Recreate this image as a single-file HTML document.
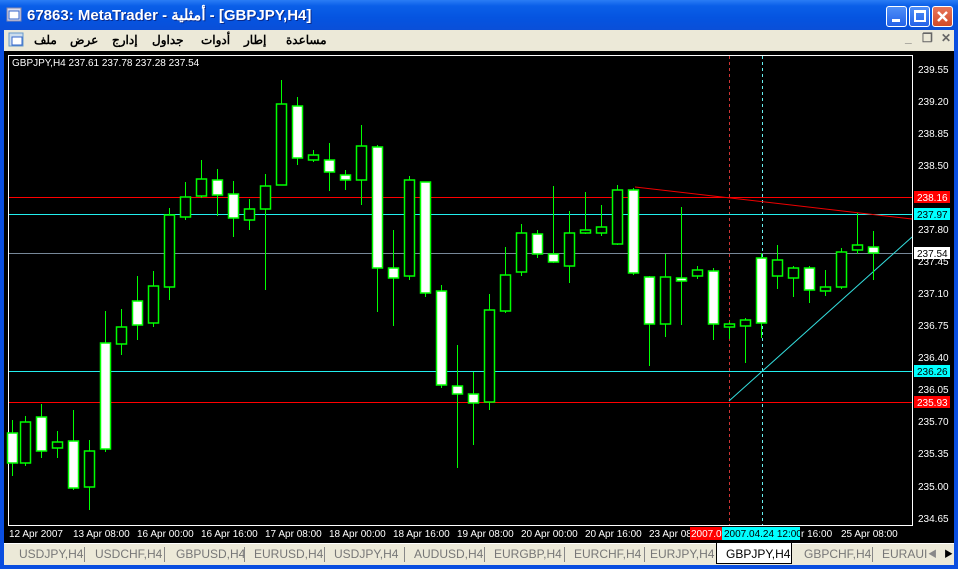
<!DOCTYPE html>
<html><head><meta charset="utf-8"><style>
*{margin:0;padding:0;box-sizing:border-box}
body{width:958px;height:569px;overflow:hidden;background:#0a4ee0;font-family:"Liberation Sans","Noto Sans CJK SC",sans-serif;position:relative}
#title{position:absolute;left:0;top:0;width:958px;height:30px;background:linear-gradient(#2a7df5,#0a5fe8 20%,#0554e0 60%,#0a4fd8);color:#fff;font-weight:bold;font-size:15px}
#title .t{position:absolute;left:27px;top:6px;text-shadow:1px 1px #0a2a8a}
.wb{position:absolute;top:6px;width:21px;height:21px;border:1px solid #fff;border-radius:3px;background:linear-gradient(#4f8ff8,#2462e8)}
#menu{position:absolute;left:4px;top:30px;width:950px;height:21px;background:#ece9d8;font-size:12px;font-weight:bold;color:#000}
#menu span{position:absolute;top:3px}
#chart{position:absolute;left:4px;top:51px;width:950px;height:492px;background:#000}
#tabs{position:absolute;left:4px;top:543px;width:950px;height:22px;background:#ece9d8;border-top:1px solid #fff;font-size:12px;color:#777}
#tabs span{position:absolute;top:3px}
.sep{position:absolute;top:3px;width:1px;height:15px;background:#888}
</style></head><body>
<div id="title">
<svg style="position:absolute;left:6px;top:7px" width="16" height="16"><rect x="1" y="1" width="14" height="13" fill="#dde" stroke="#88a"/><rect x="3" y="4" width="10" height="8" fill="#fff" stroke="#36c"/></svg>
<div class="t">67863: MetaTrader - أمثلية - [GBPJPY,H4]</div>
<div class="wb" style="left:886px"><div style="position:absolute;left:5px;top:12px;width:8px;height:3px;background:#fff"></div></div>
<div class="wb" style="left:909px"><div style="position:absolute;left:4px;top:3px;width:12px;height:12px;border:2px solid #fff;border-top-width:3px"></div></div>
<div class="wb" style="left:932px;background:linear-gradient(#e8765a,#d04a28)"><svg width="19" height="19"><path d="M5 5L14 14M14 5L5 14" stroke="#fff" stroke-width="2.5"/></svg></div>
</div>
<div id="menu">
<svg style="position:absolute;left:4px;top:2px" width="16" height="16"><rect x="1" y="1" width="14" height="13" fill="#cde" stroke="#69c"/><rect x="4" y="5" width="10" height="8" fill="#fff" stroke="#36c"/></svg>
<span style="left:30px">ملف</span><span style="left:66px">عرض</span><span style="left:108px">إدارج</span><span style="left:148px">جداول</span><span style="left:197px">أدوات</span><span style="left:240px">إطار</span><span style="left:282px">مساعدة</span>
<span style="left:901px;top:1px;color:#666">_</span><span style="left:918px;top:1px;color:#666">❐</span><span style="left:937px;top:1px;color:#666">✕</span>
</div>
<div id="chart">
<svg width="950" height="492" viewBox="4 51 950 492" style="font-family:'Liberation Sans',sans-serif;font-size:10px">
<rect x="8.5" y="55.5" width="904" height="470" fill="none" stroke="#fff"/>
<line x1="729.5" y1="56" x2="729.5" y2="525" stroke="#c33" stroke-dasharray="3,3"/>
<line x1="762.5" y1="56" x2="762.5" y2="525" stroke="#6ee" stroke-dasharray="3,3"/>
<line x1="9" y1="197.5" x2="912" y2="197.5" stroke="#f00"/>
<line x1="9" y1="214.5" x2="912" y2="214.5" stroke="#2ee"/>
<line x1="9" y1="253.5" x2="912" y2="253.5" stroke="#789"/>
<line x1="9" y1="371.5" x2="912" y2="371.5" stroke="#2ee"/>
<line x1="9" y1="402.5" x2="912" y2="402.5" stroke="#f00"/>
<line x1="635" y1="187" x2="912" y2="219" stroke="#e00"/>
<line x1="729" y1="401" x2="912" y2="237" stroke="#3dd"/>
<g stroke="#0f0" id="c"></g>
<g fill="#fff">
<text x="12" y="66">GBPJPY,H4  237.61 237.78 237.28 237.54</text>
<text x="918" y="73">239.55</text><text x="918" y="105">239.20</text><text x="918" y="137">238.85</text><text x="918" y="169">238.50</text><text x="918" y="233">237.80</text><text x="918" y="265">237.45</text><text x="918" y="297">237.10</text><text x="918" y="329">236.75</text><text x="918" y="361">236.40</text><text x="918" y="393">236.05</text><text x="918" y="425">235.70</text><text x="918" y="457">235.35</text><text x="918" y="490">235.00</text><text x="918" y="522">234.65</text>
</g>
<rect x="914" y="191" width="36" height="12" fill="#f00"/><text x="917" y="201" fill="#fff">238.16</text>
<rect x="914" y="208" width="36" height="12" fill="#0ff"/><text x="917" y="218" fill="#000">237.97</text>
<rect x="914" y="247" width="36" height="12" fill="#fff"/><text x="917" y="257" fill="#000">237.54</text>
<rect x="914" y="365" width="36" height="12" fill="#0ff"/><text x="917" y="375" fill="#000">236.26</text>
<rect x="914" y="396" width="36" height="12" fill="#f00"/><text x="917" y="406" fill="#fff">235.93</text>
<g fill="#fff">
<text x="9" y="537">12 Apr 2007</text><text x="73" y="537">13 Apr 08:00</text><text x="137" y="537">16 Apr 00:00</text><text x="201" y="537">16 Apr 16:00</text><text x="265" y="537">17 Apr 08:00</text><text x="329" y="537">18 Apr 00:00</text><text x="393" y="537">18 Apr 16:00</text><text x="457" y="537">19 Apr 08:00</text><text x="521" y="537">20 Apr 00:00</text><text x="585" y="537">20 Apr 16:00</text><text x="649" y="537">23 Apr 08</text><text x="801" y="537">r 16:00</text><text x="841" y="537">25 Apr 08:00</text>
</g>
<rect x="690" y="527" width="33" height="13" fill="#f00"/><text x="691" y="537" fill="#fff">2007.0</text>
<rect x="722" y="527" width="78" height="13" fill="#0ff"/><text x="724" y="537" fill="#000">2007.04.24 12:00</text>
</svg>
</div>
<div id="tabs">
<span style="left:15px">USDJPY,H4</span><div class="sep" style="left:80px"></div>
<span style="left:91px">USDCHF,H4</span><div class="sep" style="left:160px"></div>
<span style="left:172px">GBPUSD,H4</span><div class="sep" style="left:240px"></div>
<span style="left:250px">EURUSD,H4</span><div class="sep" style="left:320px"></div>
<span style="left:330px">USDJPY,H4</span><div class="sep" style="left:400px"></div>
<span style="left:410px">AUDUSD,H4</span><div class="sep" style="left:480px"></div>
<span style="left:490px">EURGBP,H4</span><div class="sep" style="left:560px"></div>
<span style="left:570px">EURCHF,H4</span><div class="sep" style="left:640px"></div>
<span style="left:646px">EURJPY,H4</span>
<div style="position:absolute;left:712px;top:-1px;width:76px;height:21px;background:#fff;border:1px solid #000;border-top:none"></div>
<span style="left:722px;color:#000">GBPJPY,H4</span>
<span style="left:800px">GBPCHF,H4</span><div class="sep" style="left:868px"></div>
<span style="left:878px">EURAUI</span>
<span style="left:924px;font-size:9px;color:#888">◀</span><span style="left:940px;font-size:9px;color:#000">▶</span>
</div>
<script>
var d=[[12,433,463,420,476,1],[25,422,463,416,466,0],[41,417,451,404,458,1],[57,442,448,431,458,0],[73,441,488,410,490,1],[89,451,487,440,510,0],[105,343,449,311,452,1],[121,327,344,309,355,0],[137,301,325,276,340,1],[153,286,323,271,327,0],[169,215,287,208,300,0],[185,197,217,182,220,0],[201,179,196,160,198,0],[217,180,195,169,216,1],[233,194,218,181,237,1],[249,209,220,199,230,0],[265,186,209,174,290,0],[281,104,185,80,185,0],[297,106,158,97,165,1],[313,155,160,150,162,0],[329,160,172,143,191,1],[345,175,180,170,190,1],[361,146,180,125,205,0],[377,147,268,145,312,1],[393,268,278,230,326,1],[409,180,276,176,280,0],[425,182,293,182,297,1],[441,291,385,285,388,1],[457,386,394,345,468,1],[473,394,403,372,445,1],[489,310,402,294,410,0],[505,275,311,247,313,0],[521,233,272,224,276,0],[537,234,254,230,258,1],[553,254,262,186,263,1],[569,233,266,211,283,0],[585,230,233,192,234,0],[601,227,233,205,236,0],[617,190,244,185,245,0],[633,190,273,188,275,1],[649,277,324,276,366,1],[665,277,324,254,337,0],[681,278,281,207,325,1],[697,270,276,266,279,0],[713,271,324,268,340,1],[729,324,327,322,339,0],[745,320,326,318,363,0],[761,258,323,253,338,1],[777,260,276,245,289,0],[793,268,278,266,297,0],[809,268,290,266,303,1],[825,287,291,270,296,0],[841,252,287,248,289,0],[857,245,250,213,254,0],[873,247,253,231,280,1]];
var s='';d.forEach(function(c){var x=c[0];s+='<line x1="'+(x+.5)+'" y1="'+c[3]+'" x2="'+(x+.5)+'" y2="'+c[4]+'" stroke-width="1"/><rect x="'+(x-4.5)+'" y="'+c[1]+'" width="10" height="'+Math.max(c[2]-c[1],2)+'" stroke-width="1.5" fill="'+(c[5]?'#fff':'#000')+'"/>';});
document.getElementById('c').innerHTML=s;
</script>
</body></html>
